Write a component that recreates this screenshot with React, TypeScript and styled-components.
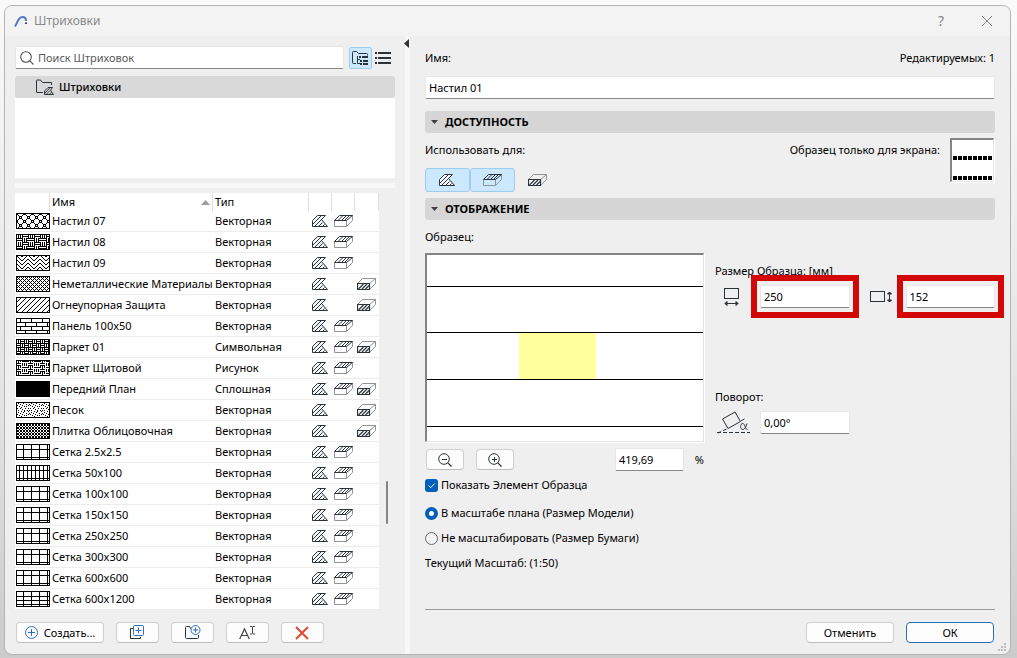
import React from 'react';
import styled, { createGlobalStyle, css } from 'styled-components';

const ink = '#2b333a';
const soft = '#8f9498';
const blue = '#2f6fbf';

const GlobalStyle = createGlobalStyle`
  * { box-sizing: border-box; }
  body {
    margin: 0;
    background: linear-gradient(#fafafa, #e4e4e4 60%, #cbcbcb);
    color: #000;
    font: 11px/16px "Noto Sans", "Open Sans", sans-serif;
  }
  input, button { font: inherit; color: inherit; }
  svg { display: block; flex: none; }
`;

const Desktop = styled.div`
  display: flex;
  min-height: 100vh;
  padding: 5px 6px 3px 4px;
`;

const Dialog = styled.main`
  position: relative;
  flex: 1;
  display: flex;
  flex-direction: column;
  background: #efefef;
  border: 1px solid #b4b4b4;
  border-radius: 8px;
  overflow: hidden;
`;

const TitleBar = styled.header`
  display: flex;
  align-items: center;
  height: 30px;
  padding: 0 12px 0 9px;
  background: #f3f3f3;
`;

const Title = styled.h1`
  flex: 1;
  margin: 0 0 0 6px;
  font-size: 12px;
  font-weight: 400;
  color: #8a8a8a;
`;

const WindowButton = styled.button`
  display: flex;
  align-items: center;
  justify-content: center;
  width: 22px;
  height: 22px;
  margin-left: 24px;
  padding: 0;
  border: 0;
  background: none;
  color: #858585;
  font-size: 14px;
`;

const Body = styled.div`
  flex: 1;
  display: grid;
  grid-template-columns: 400px 5px minmax(0, 1fr);
`;

const LeftPane = styled.section`
  display: flex;
  flex-direction: column;
  padding: 10px 10px 11px;
`;

const Splitter = styled.div`
  position: relative;
  background: #f7f7f7;
`;

const CollapseArrow = styled.button`
  position: absolute;
  top: 3px;
  left: -1px;
  padding: 0;
  border: 0;
  background: none;
`;

const SearchRow = styled.div`
  display: flex;
  align-items: center;
  height: 23px;
`;

const fieldLook = css`
  height: 23px;
  background: #fff;
  border: 1px solid #e6e6e6;
  border-bottom-color: #868686;
  border-radius: 2px;
`;

const SearchBox = styled.label`
  ${fieldLook}
  flex: 1;
  display: flex;
  align-items: center;
  gap: 4px;
  padding-left: 4px;
`;

const SearchInput = styled.input`
  flex: 1;
  min-width: 0;
  padding: 0;
  border: 0;
  outline: 0;
  background: none;
  &::placeholder { color: #5a5a5a; opacity: 1; }
`;

const ViewButton = styled.button<{ $active?: boolean }>`
  display: flex;
  align-items: center;
  justify-content: center;
  width: 23px;
  height: 22px;
  padding: 0;
  border: 1px solid ${p => (p.$active ? '#9fcdf0' : 'transparent')};
  border-radius: 2px;
  background: ${p => (p.$active ? '#cce8ff' : 'none')};
`;

const ViewButtons = styled.div`
  display: flex;
  margin-left: 5px;
`;

const Tree = styled.div`
  height: 102px;
  margin-top: 7px;
  background: #fff;
`;

const TreeRow = styled.div`
  display: flex;
  align-items: center;
  gap: 5px;
  height: 22px;
  padding-left: 21px;
  background: #d9d9d9;
  border-radius: 2px;
  font-weight: 500;
`;

const PaneHandle = styled.div`
  height: 5px;
  margin: 5px 0;
  background: #f8f8f8;
`;

const ListArea = styled.div`
  display: flex;
  align-items: flex-start;
  gap: 7px;
  padding-right: 7px;
`;

const Table = styled.table`
  flex: 1;
  table-layout: fixed;
  border-collapse: separate;
  border-spacing: 0;
  background: #fff;
  text-align: left;
`;

const HeadCell = styled.th`
  height: 18px;
  padding: 0 2px;
  border-right: 1px solid #e0e0e0;
  font-weight: 400;
`;

const HeadLabel = styled.span`
  display: flex;
  align-items: center;
  justify-content: space-between;
`;

const Cell = styled.td<{ $pad?: number }>`
  height: 21px;
  padding: 0 0 0 ${p => p.$pad ?? 2}px;
  border-bottom: 1px solid #ececec;
  white-space: nowrap;
`;

const ScrollTrack = styled.div`
  padding-top: 288px;
`;

const ScrollThumb = styled.div`
  width: 2px;
  height: 43px;
  border-radius: 1px;
  background: #858585;
`;

const Toolbar = styled.div`
  display: flex;
  gap: 12px;
  margin-top: auto;
  padding-left: 1px;
`;

const Button = styled.button<{ $width: number; $primary?: boolean }>`
  display: flex;
  align-items: center;
  justify-content: center;
  gap: 6px;
  width: ${p => p.$width}px;
  height: 21px;
  padding: 0;
  background: #fdfdfd;
  border: 1px solid ${p => (p.$primary ? '#2a70b5' : '#d0d0d0')};
  border-bottom-color: ${p => (p.$primary ? '#2a70b5' : '#bcbcbc')};
  border-radius: 4px;
`;

const RightPane = styled.section`
  display: flex;
  flex-direction: column;
  padding: 14px 15px 11px;
`;

const NameHead = styled.div`
  display: flex;
  justify-content: space-between;
  margin-bottom: 10px;
`;

const Field = styled.input`
  ${fieldLook}
  width: 100%;
  min-width: 0;
  padding: 0 3px;
  outline: 0;
`;

const SectionTitle = styled.h2`
  display: flex;
  align-items: center;
  gap: 7px;
  height: 22px;
  margin: 0;
  padding-left: 6px;
  background: #d6d6d6;
  border-radius: 3px;
  font-size: 11px;
  font-weight: 700;
`;

const NameBlock = styled.div`
  margin-bottom: 12px;
`;

const Availability = styled.div`
  display: flex;
  justify-content: space-between;
  margin: 5px 0 6px;
  height: 54px;
`;

const UseFor = styled.div`
  display: flex;
  flex-direction: column;
  gap: 10px;
  padding-top: 4px;
`;

const ToggleGroup = styled.div`
  display: flex;
`;

const Toggle = styled.button<{ $on?: boolean }>`
  display: flex;
  align-items: center;
  justify-content: center;
  width: 45px;
  height: 24px;
  padding: 0;
  border: 1px solid ${p => (p.$on ? '#9fcdf0' : 'transparent')};
  border-radius: 3px;
  background: ${p => (p.$on ? '#cce8ff' : 'none')};
`;

const ScreenSample = styled.div`
  display: flex;
  gap: 10px;
  & > span { padding-top: 4px; }
`;

const sunken = css`
  background: #fff;
  border-style: solid;
  border-width: 2px 1px 1px 2px;
  border-color: #858585 #e4e4e4 #e4e4e4 #858585;
  box-shadow: 1px 1px 0 #fff;
`;

const SampleTile = styled.div`
  ${sunken}
  width: 44px;
  height: 44px;
  margin-right: 1px;
`;

const DisplayGrid = styled.div`
  display: grid;
  grid-template-columns: 279px minmax(0, 1fr);
  gap: 11px;
  padding-top: 9px;
`;

const PreviewColumn = styled.div`
  display: flex;
  flex-direction: column;
`;

const Preview = styled.div`
  ${sunken}
  height: 189px;
  margin: 8px 0 6px;
`;

const ZoomRow = styled.div`
  display: flex;
  align-items: center;
  gap: 12px;
  padding-left: 1px;
  margin-bottom: 6px;
`;

const PercentLabel = styled.label`
  display: flex;
  align-items: center;
  gap: 11px;
  width: 89px;
  margin-left: auto;
`;

const Option = styled.label`
  display: flex;
  align-items: center;
  gap: 3px;
  margin-bottom: 9px;
`;

const OptionGroup = styled.div`
  margin-top: 3px;
`;

const CheckBox = styled.input`
  appearance: none;
  width: 13px;
  height: 13px;
  margin: 0;
  border-radius: 3px;
  background: #005fb8;
`;

const CheckWrap = styled.span`
  position: relative;
  display: flex;
  & > svg { position: absolute; inset: 0; pointer-events: none; }
`;

const Radio = styled.input`
  appearance: none;
  width: 13px;
  height: 13px;
  margin: 0;
  border: 1px solid #6a6a6a;
  border-radius: 50%;
  background: #f4f4f4;
  &:checked { border: 4px solid #005fb8; background: #fff; }
`;

const SizeColumn = styled.div`
  display: flex;
  flex-direction: column;
  gap: 6px;
  padding-top: 34px;
`;

const SizeRow = styled.div`
  display: grid;
  grid-template-columns: 45px minmax(0, 1fr) 56px minmax(0, 1fr);
  align-items: center;
`;

const IconSlot = styled.span<{ $pad: number }>`
  padding-left: ${p => p.$pad}px;
`;

const Highlighted = styled.div`
  position: relative;
  &::after {
    content: '';
    position: absolute;
    inset: -10px -9px;
    border: 6px solid #d40707;
    pointer-events: none;
  }
`;

const RotationBlock = styled.div`
  display: flex;
  flex-direction: column;
  gap: 6px;
  margin-top: 75px;
`;

const Divider = styled.hr`
  width: 100%;
  margin: auto 0 12px;
  border: 0;
  border-top: 1px solid #9a9a9a;
`;

const Footer = styled.footer`
  display: flex;
  justify-content: flex-end;
  gap: 12px;
  padding-right: 1px;
`;

const Grip = styled.div`
  position: absolute;
  right: 3px;
  bottom: 2px;
`;

/* ---- hatch swatches ---- */

type Pixel = (x: number, y: number) => boolean;

const grid = (stepX: number, stepY: number): Pixel => (x, y) =>
  (x + 1) % stepX === 0 || (y >= 4 && (y - 5) % stepY === 0);

/* Builds a hatch from a tile drawn as rows of characters, '#' being ink. */
const tile = (...lines: string[]): Pixel => (x, y) => {
  const line = lines[y % lines.length];
  return line[x % line.length] === '#';
};

const hatches: Record<string, Pixel> = {
  rings: (x, y) => {
    const near = (dx: number, dy: number) => (x + dx + y + dy + 16) % 8 === 0 && (x + dx - y - dy + 32) % 8 === 0;
    if (near(0, 0)) return false;
    return near(1, 0) || near(-1, 0) || near(0, 1) || near(0, -1) || (x + y) % 8 === 0 || (x - y + 32) % 8 === 0;
  },
  basket: tile(
    '#.#.#.######',
    '#.#.#.#.....',
    '#.#.#.######',
    '#.#.#.#.....',
    '#######.#.##',
    '......#.#.#.',
    '#######.#.##',
    '......#.#.#.',
  ),
  chevron: tile(
    '#...#..#...#',
    '.#...##...#.',
    '..#......#..',
    '...#....#...',
  ),
  cross: (x, y) => (x + y) % 4 === 0 || (x - y + 32) % 4 === 0,
  diagonal: (x, y) => (x + y) % 5 === 0,
  brick: (x, y) => y % 4 === 0 || (x + (Math.floor(y / 4) % 2 ? 6 : 0)) % 11 === 4,
  parquet: tile(
    '########',
    '#.#.#...',
    '#.#.####',
    '#.#.#...',
    '########',
    '#...#.#.',
    '#####.#.',
    '#...#.#.',
  ),
  board: tile(
    '#.#.#.......',
    '#.#.#.######',
    '..#.........',
    '#####.#.#.#.',
    '......#.#.#.',
    '#####.#.#.#.',
  ),
  solid: () => true,
  sand: tile(
    '.....#..#...#',
    '..#....#.....',
    '#...#.....#..',
    '.#....#.....#',
    '...#....#.#..',
    '.....#.......',
    '.#..#....#..#',
    '......#......',
    '#.#.....#..#.',
  ),
  tile: (x, y) => (x + y) % 3 === 0 || (x - y + 33) % 3 === 0,
  grid: grid(8, 8),
  tall: grid(4, 8),
  wide: grid(8, 4),
};

function Swatch({ kind }: { kind: string }) {
  const on = hatches[kind];
  let d = '';
  for (let y = 0; y < 16; y++) {
    for (let x = 0; x < 34; x++) {
      if (x === 0 || y === 0 || x === 33 || y === 15 || on(x, y)) d += `M${x} ${y}h1v1h-1z`;
    }
  }
  return (
    <svg width="34" height="16" shapeRendering="crispEdges" aria-hidden="true">
      <path d={d} fill="#000" />
    </svg>
  );
}

/* ---- icons ---- */

const DraftIcon = () => (
  <svg width="17" height="12" viewBox="0 0 17 12" fill="none" stroke={ink}>
    <path d="M.5 11.500V5.500L5.500 .5H13.500L9.500 4.500 15.500 11.500Z" fill="#f4f6f7" />
    <path d="M1 9 9 1M2.500 11.500 12 2M6.500 11.500 10.500 7.500M10.500 11.500 12.500 9.500" />
  </svg>
);

const CoverIcon = () => (
  <svg width="19" height="12" viewBox="0 0 19 12" fill="none">
    <path d="M.5 5.500V11.500H12.500V5.500M12.500 11.500 18.500 5.500V.5" stroke={soft} />
    <path d="M.5 5.500 5.500 .5H18.500L12.500 5.500Z" stroke={ink} />
    <path d="M4 5.500 9 .5M7.500 5.500 12.500 .5M10.500 5.500 15.500 .5" stroke={ink} />
  </svg>
);

const CutIcon = () => (
  <svg width="19" height="12" viewBox="0 0 19 12" fill="none">
    <path d="M.5 5.500 5.500 .5H18.500V5.500L12.500 11.500M12.500 5.500 18.500 .5" stroke={soft} />
    <path d="M.5 5.500H12.500V11.500H.5Z" stroke={ink} strokeWidth="1.200" fill="#f6f6f6" />
    <path d="M1.500 11 6.500 6M5 11 10 6M8.500 11 12 7.500" stroke={ink} strokeWidth="1.100" />
  </svg>
);

const AppIcon = () => (
  <svg width="14" height="13" viewBox="0 0 14 13" fill="none" stroke="#5578c8" strokeWidth="2">
    <path d="M1 11.500C3.500 8 4 2 8.500 2 11 2 12 3.500 12 6" />
    <path d="M12 7.500v1.500" stroke="#2c3e78" />
  </svg>
);

const CloseIcon = () => (
  <svg width="12" height="12" viewBox="0 0 12 12" stroke="#858585">
    <path d="M1 1 11 11M11 1 1 11" />
  </svg>
);

const SearchIcon = () => (
  <svg width="14" height="14" viewBox="0 0 14 14" fill="none" stroke="#555" strokeWidth="1.100">
    <circle cx="6" cy="6" r="5.300" />
    <path d="M9.800 9.800 13.500 13.500" />
  </svg>
);

const FolderTreeIcon = () => (
  <svg width="17" height="16" viewBox="0 0 17 16" fill="none" stroke={ink}>
    <path d="M4 13.500H1.500Q.5 13.500 .5 12.500V2.500Q.5 1.500 1.500 1.500H4.500L6.500 3.500H14.500Q15.500 3.500 15.500 4.500V5.500" />
    <path d="M5.500 6V13.500H8M5.500 9.500H8" />
    <path d="M7 7H9M10 7H16M8 11H10M11 11H16M8 14H10M11 14H16" strokeWidth="2" shapeRendering="crispEdges" />
  </svg>
);

const ListIcon = () => (
  <svg width="17" height="12" viewBox="0 0 17 12" stroke={ink} shapeRendering="crispEdges">
    <path d="M0 1H2M3 1H16M0 6H2M3 6H16M0 11H2M3 11H16" strokeWidth="2" />
  </svg>
);

const FolderHatchIcon = () => (
  <svg width="18" height="16" viewBox="0 0 18 16" fill="none" stroke={ink}>
    <path d="M7 13.500H1Q.5 13.500 .5 13V1.500Q.5 1 1 1H4.500L6.500 3.500H15.500V6" />
    <path d="M8.500 15.500V12L12 8.500H16.500L14.500 11 17.500 15.500Z" />
    <path d="M9 14 14 8.800M10.500 15 14 11.500M13.500 15.200 15.500 13.200" />
  </svg>
);

const PlusCircleIcon = () => (
  <svg width="13" height="13" viewBox="0 0 13 13" fill="none" stroke={blue}>
    <circle cx="6.500" cy="6.500" r="6" />
    <path d="M6.500 3V10M3 6.500H10" />
  </svg>
);

const DuplicateIcon = () => (
  <svg width="15" height="15" viewBox="0 0 15 15" fill="none">
    <path d="M3 3.500H.5V13.500H10.500V12" stroke={ink} />
    <rect x="3.500" y=".5" width="10" height="10" rx="1" stroke={blue} />
    <path d="M8.500 2.500V8.500M5.500 5.500H11.500" stroke={blue} />
  </svg>
);

const NewFolderIcon = () => (
  <svg width="16" height="15" viewBox="0 0 16 15" fill="none">
    <path d="M6 3.500H5.500L4.500 1.500H1.500Q.5 1.500 .5 2.500V12.500Q.5 13.500 1.500 13.500H12.500Q13.500 13.500 13.500 12.500V10" stroke={ink} />
    <circle cx="10.500" cy="5" r="4.500" stroke={blue} />
    <path d="M10.500 2.500V7.500M8 5H13" stroke={blue} />
  </svg>
);

const RenameIcon = () => (
  <svg width="17" height="14" viewBox="0 0 17 14" fill="none" stroke="#444">
    <path d="M.7 13 5.500 3 10.300 13M2.500 9.500H8.500" strokeWidth="1.200" />
    <path d="M11 .5H13L13.500 1 14 .5H16M13.500 1V7.500M11 8H13L13.500 7.500 14 8H16" />
  </svg>
);

const DeleteIcon = () => (
  <svg width="15" height="14" viewBox="0 0 15 14" stroke="#e2492f" strokeWidth="2">
    <path d="M1 1 13 13M13 1 1 13" />
  </svg>
);

const ZoomIcon = ({ plus }: { plus?: boolean }) => (
  <svg width="14" height="14" viewBox="0 0 14 14" fill="none" stroke={ink}>
    <circle cx="6" cy="6" r="5.300" />
    <path d={plus ? 'M6.500 4V9M4 6.500H9' : 'M4 6.500H9'} />
    <path d="M9.800 9.800 13.500 13.500" strokeWidth="1.200" />
  </svg>
);

const WidthIcon = () => (
  <svg width="16" height="19" viewBox="0 0 16 19" fill="none" stroke={ink}>
    <rect x=".5" y="1.500" width="14" height="10" />
    <path d="M1 16.500H14M3 14.500 1 16.500 3 18.500ZM12 14.500 14 16.500 12 18.500Z" fill={ink} />
  </svg>
);

const HeightIcon = () => (
  <svg width="23" height="12" viewBox="0 0 23 12" fill="none" stroke={ink}>
    <rect x=".5" y=".5" width="14" height="10" />
    <path d="M19.500 1V11M17.500 3 19.500 1 21.500 3ZM17.500 9 19.500 11 21.500 9Z" fill={ink} />
  </svg>
);

const AngleIcon = () => (
  <svg width="33" height="23" viewBox="0 0 33 23" fill="none" stroke={ink}>
    <path d="M5.500 8 18 1 23.500 10.500 11 17.500Z" />
    <path d="M9.500 18 1 22M24 10 29 7" strokeDasharray="4 2" />
    <path d="M0 21.500H33" strokeDasharray="4 2" />
    <path d="M30 12.500C28.500 17 27.500 18.500 25.800 18.500 22.800 18.500 22.800 12.500 25.800 12.500 28 12.500 28 18.500 30.500 18.500" />
  </svg>
);

const Triangle = () => (
  <svg width="7" height="4" viewBox="0 0 7 4"><path d="M0 0H7L3.500 4Z" fill="#404040" /></svg>
);

/* ---- data ---- */

type Row = [name: string, type: string, hatch: string, uses: string];

const rows: Row[] = [
  ['Настил 07', 'Векторная', 'rings', 'dc'],
  ['Настил 08', 'Векторная', 'basket', 'dc'],
  ['Настил 09', 'Векторная', 'chevron', 'dc'],
  ['Неметаллические Материалы', 'Векторная', 'cross', 'dx'],
  ['Огнеупорная Защита', 'Векторная', 'diagonal', 'dx'],
  ['Панель 100x50', 'Векторная', 'brick', 'dc'],
  ['Паркет 01', 'Символьная', 'parquet', 'dcx'],
  ['Паркет Щитовой', 'Рисунок', 'board', 'dc'],
  ['Передний План', 'Сплошная', 'solid', 'dcx'],
  ['Песок', 'Векторная', 'sand', 'dx'],
  ['Плитка Облицовочная', 'Векторная', 'tile', 'dx'],
  ['Сетка 2.5x2.5', 'Векторная', 'grid', 'dc'],
  ['Сетка 50x100', 'Векторная', 'tall', 'dc'],
  ['Сетка 100x100', 'Векторная', 'grid', 'dc'],
  ['Сетка 150x150', 'Векторная', 'grid', 'dc'],
  ['Сетка 250x250', 'Векторная', 'grid', 'dc'],
  ['Сетка 300x300', 'Векторная', 'grid', 'dc'],
  ['Сетка 600x600', 'Векторная', 'grid', 'dc'],
  ['Сетка 600x1200', 'Векторная', 'wide', 'dc'],
];

const columnWidths = [35, 163, 96, 23, 23, 24];

function HatchTable() {
  return (
    <Table>
      <colgroup>
        {columnWidths.map((w, i) => <col key={i} width={w} />)}
      </colgroup>
      <thead>
        <tr>
          <HeadCell />
          <HeadCell>
            <HeadLabel>
              Имя
              <svg width="9" height="5" viewBox="0 0 9 5"><path d="M0 5H9L4.500 0Z" fill="#9a9a9a" /></svg>
            </HeadLabel>
          </HeadCell>
          <HeadCell>Тип</HeadCell>
          <HeadCell />
          <HeadCell />
          <HeadCell />
        </tr>
      </thead>
      <tbody>
        {rows.map(([name, type, hatch, uses]) => (
          <tr key={name}>
            <Cell $pad={1}><Swatch kind={hatch} /></Cell>
            <Cell>{name}</Cell>
            <Cell>{type}</Cell>
            <Cell $pad={3}>{uses.includes('d') && <DraftIcon />}</Cell>
            <Cell>{uses.includes('c') && <CoverIcon />}</Cell>
            <Cell>{uses.includes('x') && <CutIcon />}</Cell>
          </tr>
        ))}
      </tbody>
    </Table>
  );
}

export default function App() {
  return (
    <Desktop>
      <GlobalStyle />
      <Dialog>
        <TitleBar>
          <AppIcon />
          <Title>Штриховки</Title>
          <WindowButton aria-label="Справка">?</WindowButton>
          <WindowButton aria-label="Закрыть"><CloseIcon /></WindowButton>
        </TitleBar>
        <Body>
          <LeftPane>
            <SearchRow>
              <SearchBox>
                <SearchIcon />
                <SearchInput placeholder="Поиск Штриховок" aria-label="Поиск Штриховок" />
              </SearchBox>
              <ViewButtons>
                <ViewButton $active aria-label="Папки"><FolderTreeIcon /></ViewButton>
                <ViewButton aria-label="Список"><ListIcon /></ViewButton>
              </ViewButtons>
            </SearchRow>
            <Tree>
              <TreeRow><FolderHatchIcon />Штриховки</TreeRow>
            </Tree>
            <PaneHandle />
            <ListArea>
              <HatchTable />
              <ScrollTrack><ScrollThumb /></ScrollTrack>
            </ListArea>
            <Toolbar>
              <Button $width={88}><PlusCircleIcon />Создать...</Button>
              <Button $width={43} aria-label="Дублировать"><DuplicateIcon /></Button>
              <Button $width={43} aria-label="Новая папка"><NewFolderIcon /></Button>
              <Button $width={43} aria-label="Переименовать"><RenameIcon /></Button>
              <Button $width={43} aria-label="Удалить"><DeleteIcon /></Button>
            </Toolbar>
          </LeftPane>
          <Splitter>
            <CollapseArrow aria-label="Свернуть">
              <svg width="5" height="9" viewBox="0 0 5 9"><path d="M5 0V9L0 4.500Z" fill="#333" /></svg>
            </CollapseArrow>
          </Splitter>
          <RightPane>
            <NameBlock>
              <NameHead>
                <label htmlFor="name">Имя:</label>
                <span>Редактируемых: 1</span>
              </NameHead>
              <Field id="name" defaultValue="Настил 01" />
            </NameBlock>
            <SectionTitle><Triangle />ДОСТУПНОСТЬ</SectionTitle>
            <Availability>
              <UseFor>
                <span>Использовать для:</span>
                <ToggleGroup>
                  <Toggle $on aria-label="Чертёжные штриховки"><DraftIcon /></Toggle>
                  <Toggle $on aria-label="Штриховки поверхности"><CoverIcon /></Toggle>
                  <Toggle aria-label="Штриховки сечения"><CutIcon /></Toggle>
                </ToggleGroup>
              </UseFor>
              <ScreenSample>
                <span>Образец только для экрана:</span>
                <SampleTile>
                  <svg width="41" height="41" shapeRendering="crispEdges" stroke="#000" strokeWidth="4" strokeDasharray="4 1">
                    <path d="M1 18H40M1 38H40" />
                  </svg>
                </SampleTile>
              </ScreenSample>
            </Availability>
            <SectionTitle><Triangle />ОТОБРАЖЕНИЕ</SectionTitle>
            <DisplayGrid>
              <PreviewColumn>
                <span>Образец:</span>
                <Preview>
                  <svg width="100%" height="186" shapeRendering="crispEdges">
                    <rect x="92" y="78" width="77" height="47" fill="#ffff9e" />
                    <path d="M0 31.500H276M0 77.500H276M0 124.500H276M0 171.500H276" stroke="#000" />
                  </svg>
                </Preview>
                <ZoomRow>
                  <Button $width={38} aria-label="Уменьшить"><ZoomIcon /></Button>
                  <Button $width={38} aria-label="Увеличить"><ZoomIcon plus /></Button>
                  <PercentLabel>
                    <Field defaultValue="419,69" />%
                  </PercentLabel>
                </ZoomRow>
                <Option>
                  <CheckWrap>
                    <CheckBox type="checkbox" defaultChecked />
                    <svg width="13" height="13" viewBox="0 0 13 13" fill="none" stroke="#fff">
                      <path d="M3.500 6.500 5.700 8.700 9.700 4.500" />
                    </svg>
                  </CheckWrap>
                  Показать Элемент Образца
                </Option>
                <OptionGroup>
                  <Option><Radio type="radio" name="scale" defaultChecked />В масштабе плана (Размер Модели)</Option>
                  <Option><Radio type="radio" name="scale" />Не масштабировать (Размер Бумаги)</Option>
                </OptionGroup>
                <span>Текущий Масштаб: (1:50)</span>
              </PreviewColumn>
              <SizeColumn>
                <span>Размер Образца: [мм]</span>
                <SizeRow>
                  <IconSlot $pad={9}><WidthIcon /></IconSlot>
                  <Highlighted><Field defaultValue="250" aria-label="Ширина образца" /></Highlighted>
                  <IconSlot $pad={20}><HeightIcon /></IconSlot>
                  <Highlighted><Field defaultValue="152" aria-label="Высота образца" /></Highlighted>
                </SizeRow>
                <RotationBlock>
                  <label htmlFor="angle">Поворот:</label>
                  <SizeRow>
                    <IconSlot $pad={2}><AngleIcon /></IconSlot>
                    <Field id="angle" defaultValue="0,00°" />
                  </SizeRow>
                </RotationBlock>
              </SizeColumn>
            </DisplayGrid>
            <Divider />
            <Footer>
              <Button $width={88}>Отменить</Button>
              <Button $width={88} $primary>ОК</Button>
            </Footer>
          </RightPane>
        </Body>
        <Grip>
          <svg width="9" height="9" fill="#bdbdbd" shapeRendering="crispEdges">
            <path d="M6 0h2v2h-2zM6 3h2v2h-2zM3 3h2v2h-2zM6 6h2v2h-2zM3 6h2v2h-2zM0 6h2v2h-2z" />
          </svg>
        </Grip>
      </Dialog>
    </Desktop>
  );
}
